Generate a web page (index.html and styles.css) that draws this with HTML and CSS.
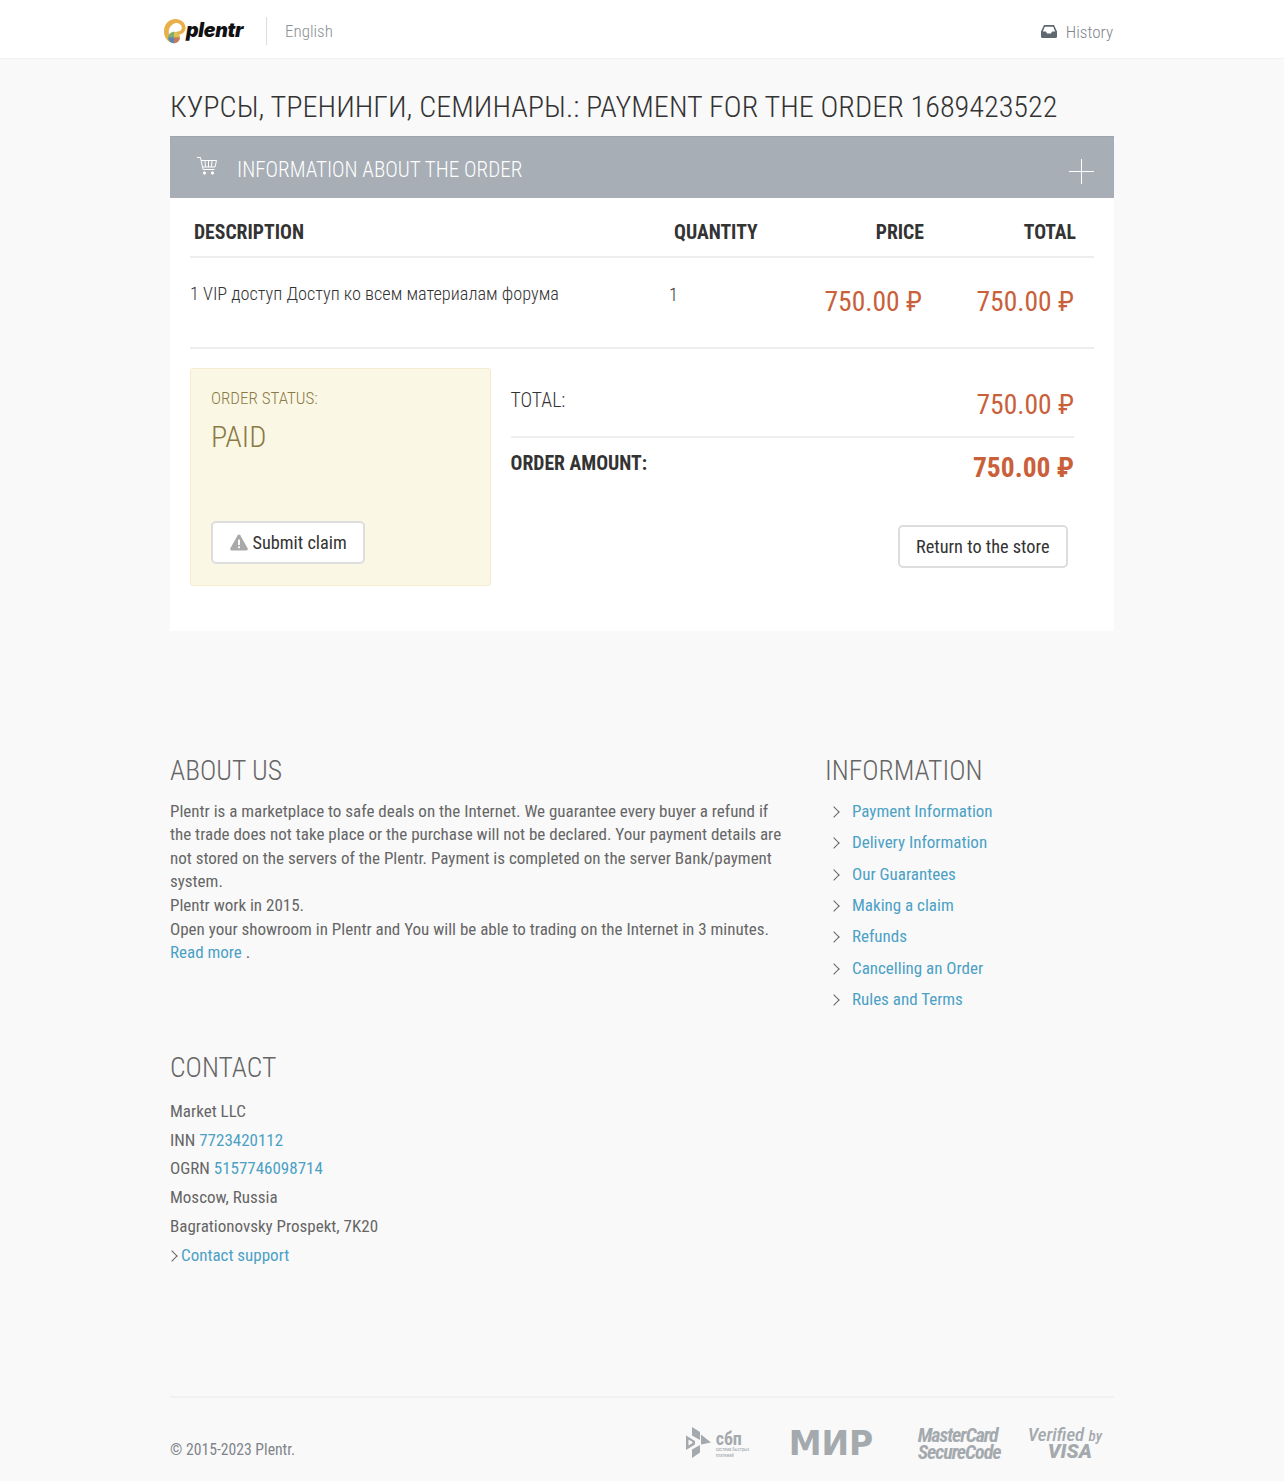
FILE: index.html
```html
<!DOCTYPE html>
<html lang="en">
<head>
    <meta charset="UTF-8">
    <meta name="viewport" content="width=device-width, initial-scale=1.0">
    <title>Plentr - Payment for the order</title>
    <link rel="stylesheet" href="styles.css">
</head>
<body>
    <header class="topbar">
        <div class="wrap topbar-in">
            <a class="logo" href="#">
                <svg class="logo-mark" width="22" height="25" viewBox="0 0 22 25">
                    <path d="M8 24C3 22 0 18 0 12.500 0 5 5 0 11.500 0 17 0 21.500 4 21.500 8.500c0 5-4.500 8-9.500 7l.8-3c3 .5 5-1.500 5-4 0-2.500-2.800-4.800-6-4.500C7.500 5.300 4.800 8.500 4.800 12.500c0 4 1 8 3.200 11.500z" fill="#e9b04a"/>
                    <circle cx="10" cy="18.500" r="5.800" fill="#7fae74"/>
                    <path d="M10 12.700a5.800 5.800 0 0 1 5.800 5.800H10z" fill="#e4c24f"/>
                    <path d="M4.200 18.500a5.800 5.800 0 0 0 5.800 5.800V18.500z" fill="#5d86b5"/>
                    <path d="M10 18.500h5.800a5.800 5.800 0 0 1-5.800 5.800z" fill="#c9785a"/>
                </svg>
                <span class="logo-text">plentr</span>
            </a>
            <a class="lang" href="#">English</a>
            <a class="history" href="#">
                <svg width="16" height="13" viewBox="0 0 16 13">
                    <path d="M3 0h10l3 6.500V11.500a1.500 1.500 0 0 1-1.500 1.500h-13A1.500 1.500 0 0 1 0 11.500V6.500z M3.800 1.800 1.900 6.500H5l1 2h4l1-2h3.100l-1.900-4.700z" fill="#5f6770" fill-rule="evenodd"/>
                </svg>
                History
            </a>
        </div>
    </header>

    <main class="wrap">
        <h1 class="page-title">КУРСЫ, ТРЕНИНГИ, СЕМИНАРЫ.: PAYMENT FOR THE ORDER 1689423522</h1>

        <section class="order">
            <div class="order-head">
                <svg class="cart" width="20" height="18" viewBox="0 0 20 18" fill="none" stroke="#fff" stroke-width="1">
                    <path d="M0 .5h3.500L6 12.500h11.500"/>
                    <path d="M4 3.500h15.500L18 10H5.500"/>
                    <path d="M8 3.500 8.500 10M11.500 3.500V10M15 3.500 14.500 10"/>
                    <circle cx="7.500" cy="16" r="1.200" fill="#fff"/>
                    <circle cx="15.500" cy="16" r="1.200" fill="#fff"/>
                </svg>
                <span class="order-head-title">INFORMATION ABOUT THE ORDER</span>
                <span class="plus"></span>
            </div>

            <div class="order-body">
                <div class="items items-head">
                    <div>DESCRIPTION</div>
                    <div>QUANTITY</div>
                    <div class="num">PRICE</div>
                    <div class="num">TOTAL</div>
                </div>
                <div class="items items-row">
                    <div>1 VIP доступ Доступ ко всем материалам форума</div>
                    <div class="qty">1</div>
                    <div class="num price">750.00 ₽</div>
                    <div class="num price">750.00 ₽</div>
                </div>

                <div class="summary">
                    <div class="status-box">
                        <div class="status-label">ORDER STATUS:</div>
                        <div class="status-value">PAID</div>
                        <a class="btn" href="#">
                            <svg width="18" height="17" viewBox="0 0 18 17">
                                <path d="M9 .5c.6 0 1 .3 1.300.8l7.300 13c.5.9 0 2.200-1.100 2.200H1.500C.4 16.500-.1 15.200.4 14.300L7.700 1.300C8 .8 8.400.5 9 .5z" fill="#a9a9a9"/>
                                <path d="M8.100 5.500h1.800v5.500H8.100zM8.100 12.300h1.800v2H8.100z" fill="#fff"/>
                            </svg>
                            Submit claim
                        </a>
                    </div>
                    <div class="totals">
                        <div class="total-line">
                            <span>TOTAL:</span>
                            <span class="price">750.00 ₽</span>
                        </div>
                        <div class="total-line total-line-strong">
                            <span>ORDER AMOUNT:</span>
                            <span class="price">750.00 ₽</span>
                        </div>
                        <div class="return-row">
                            <a class="btn" href="#">Return to the store</a>
                        </div>
                    </div>
                </div>
            </div>
        </section>

        <section class="info">
            <div class="about">
                <h3>ABOUT US</h3>
                <p>Plentr is a marketplace to safe deals on the Internet. We guarantee every buyer a refund if the trade does not take place or the purchase will not be declared. Your payment details are not stored on the servers of the Plentr. Payment is completed on the server Bank/payment system.<br>
                Plentr work in 2015.<br>
                Open your showroom in Plentr and You will be able to trading on the Internet in 3 minutes.<br>
                <a href="#">Read more</a> .</p>
            </div>
            <div class="links">
                <h3>INFORMATION</h3>
                <ul>
                    <li><a href="#">Payment Information</a></li>
                    <li><a href="#">Delivery Information</a></li>
                    <li><a href="#">Our Guarantees</a></li>
                    <li><a href="#">Making a claim</a></li>
                    <li><a href="#">Refunds</a></li>
                    <li><a href="#">Cancelling an Order</a></li>
                    <li><a href="#">Rules and Terms</a></li>
                </ul>
            </div>
        </section>

        <section class="contact">
            <h3>CONTACT</h3>
            <div>Market LLC</div>
            <div>INN <a href="#">7723420112</a></div>
            <div>OGRN <a href="#">5157746098714</a></div>
            <div>Moscow, Russia</div>
            <div>Bagrationovsky Prospekt, 7K20</div>
            <div class="support"><a href="#">Contact support</a></div>
        </section>

        <footer class="footer">
            <span class="copy">© 2015-2023 Plentr.</span>
            <div class="pay-logos">
                <div class="sbp">
                    <svg width="25" height="31" viewBox="0 0 25 31">
                        <path d="M6 0l8 5v8L6 8.500z M15 7.500 25 15.500l-10 2z M0 8.500l9 5.500v3.500L0 23zM2.500 12.500v6l4-2.600v-1zM6 22.500l8-4.500v7.500L6 31z" fill="#a4a9ae" fill-rule="evenodd"/>
                    </svg>
                    <div class="sbp-text">
                        <span class="sbp-name">сбп</span>
                        <span class="sbp-sub">система быстрых<br>платежей</span>
                    </div>
                </div>
                <div class="mir">МИР</div>
                <div class="securecode">MasterCard<br>SecureCode</div>
                <div class="visa"><span class="visa-top">Verified <small>by</small></span><span class="visa-name">VISA</span></div>
            </div>
        </footer>
    </main>
</body>
</html>
```

FILE: styles.css
```css
* { box-sizing: border-box; margin: 0; padding: 0; }
body { background: #f9f9f9; color: #333; font-family: 'Roboto Condensed', 'Roboto', sans-serif; font-stretch: 75%; font-size: 17px; height: 1481px; overflow: hidden; }
a { color: #4ba1c5; text-decoration: none; }
.wrap { width: 944px; margin: 0 auto; }

.topbar { background: #fff; height: 59px; border-bottom: 1px solid #f0f0f0; }
.topbar-in { display: flex; align-items: center; height: 58px; padding-top: 4px; }
.logo { display: flex; align-items: center; margin-left: -6px; width: 103px; height: 28px; border-right: 1px solid #ddd; }
.logo-mark { flex: none; }
.logo-text { font-family: 'Inter', sans-serif; font-stretch: normal; font-style: italic; font-weight: 900; font-size: 19.500px; color: #111; letter-spacing: -0.3px; margin-top: -3px; }
.lang { color: #8a8f94; font-weight: 300; font-size: 17px; margin-left: 18px; }
.history { margin-left: auto; color: #7f858b; font-weight: 300; font-size: 17px; display: flex; align-items: center; gap: 9px; margin-top: 1px; margin-right: 1px; }

.page-title { font-weight: 300; font-size: 30.200px; line-height: 38px; color: #333; padding-top: 29px; height: 77px; }

.order { background: #fff; height: 495px; }
.order-head { background: #a7aeb6; height: 62px; border-top: 1px solid #9ea5ad; display: flex; align-items: center; padding: 0 20px 0 27px; color: #fff; }
.cart { margin-top: -3px; }
.order-head-title { font-size: 21.150px; font-weight: 300; margin-left: 20px; flex: 1; margin-top: 4px; }
.plus { width: 25px; height: 25px; position: relative; margin-top: 8px; }
.plus::before, .plus::after { content: ""; position: absolute; background: #fff; }
.plus::before { left: 0; right: 0; top: 12px; height: 1px; }
.plus::after { top: 0; bottom: 0; left: 12px; width: 1px; }

.order-body { padding: 0 20px; }
.items { display: grid; grid-template-columns: 480px 110px 162px 152px; }
.num { text-align: right; padding-right: 20px; }
.items-head { font-weight: 700; font-size: 19.700px; height: 60px; align-items: center; border-bottom: 2px solid #eee; padding-top: 10px; }
.items-head > div:nth-child(-n+2) { padding-left: 4px; }
.items-head .num { padding-right: 18px; }
.items-row { height: 91px; border-bottom: 2px solid #eee; font-weight: 300; font-size: 18.300px; padding-top: 25px; }
.qty { margin: 1px 0 0 -1px; }
.price { color: #c9603a; font-size: 27.500px; font-weight: 400; line-height: 36px; }
.items-row .price { margin-top: 1px; }

.summary { display: flex; padding-top: 19px; }
.status-box { width: 301px; height: 218px; background: #faf7e4; border: 1px solid #f3ecd0; border-radius: 3px; padding: 19px 20px 20px; color: #8b7a45; display: flex; flex-direction: column; align-items: flex-start; }
.status-label { font-weight: 300; font-size: 17px; line-height: 20px; }
.status-value { font-weight: 300; font-size: 30.200px; line-height: 38px; margin-top: 10px; flex: 1; }
.status-box .btn { margin-bottom: 1px; }
.btn { display: inline-flex; align-items: center; gap: 5px; height: 43px; padding: 0 16.500px; background: #fff; border: 2px solid #ddd; border-radius: 5px; color: #333; font-size: 18.300px; font-weight: 400; }
.totals { flex: 1; margin: 0 20px 0 19.500px; }
.total-line { display: flex; justify-content: space-between; font-weight: 300; font-size: 19.700px; height: 70px; padding-top: 19px; border-bottom: 2px solid #eee; }
.total-line > :first-child { line-height: 28px; }
.total-line-strong { font-weight: 700; border-bottom: 0; height: 87px; padding-top: 12px; }
.total-line-strong .price { font-weight: 700; }
.return-row { display: flex; justify-content: flex-end; padding-right: 6px; }

.info { display: flex; padding-top: 123.300px; color: #666; height: 420px; }
h3 { font-weight: 300; font-size: 27.600px; line-height: 34px; color: #666; margin-bottom: 11.400px; }
.about { width: 655px; }
.about p { width: 620px; line-height: 23.600px; }
.links ul { list-style: none; padding-top: 0.400px; }
.links li { height: 31.300px; line-height: 23.600px; padding-left: 27px; position: relative; }
.links li::before, .support::before { content: ""; position: absolute; width: 7px; height: 7px; border-top: 1.500px solid #666; border-right: 1.500px solid #666; transform: rotate(45deg); }
.links li::before { left: 5px; top: 8px; }

.contact { color: #666; height: 345px; }
.contact h3 { margin-bottom: 14.800px; }
.contact > div { height: 28.800px; line-height: 23.600px; position: relative; }
.support { padding-left: 11px; }
.support::before { left: -2px; top: 8px; }

.footer { border-top: 2px solid #f1f1f1; height: 84px; display: flex; align-items: center; justify-content: space-between; color: #7f858b; font-size: 15.700px; }
.copy { margin-top: 21px; }
.pay-logos { display: flex; align-items: center; color: #a4a9ae; margin-top: 6px; padding-right: 12px; }
.sbp { display: flex; align-items: center; gap: 5px; width: 103px; }
.sbp-text { display: flex; flex-direction: column; margin-top: 5px; }
.sbp-name { font-weight: 700; font-size: 18px; line-height: 15px; }
.sbp-sub { font-size: 4.600px; line-height: 6px; margin-top: 1px; }
.mir { font-family: 'DejaVu Sans', sans-serif; font-stretch: normal; font-weight: 700; font-size: 33px; line-height: 30px; width: 129px; margin-top: 4px; }
.securecode { font-weight: 700; font-style: italic; font-size: 20px; line-height: 17.500px; letter-spacing: -1.050px; width: 110px; margin-top: 4px; }
.visa { display: flex; flex-direction: column; align-items: center; }
.visa-top { font-style: italic; font-weight: 500; font-size: 19px; line-height: 19px; }
.visa-top small { font-size: 15px; }
.visa-name { font-family: 'Roboto', sans-serif; font-stretch: normal; font-style: italic; font-weight: 900; font-size: 20px; line-height: 18px; padding-left: 10px; margin-top: -4px; }
```
